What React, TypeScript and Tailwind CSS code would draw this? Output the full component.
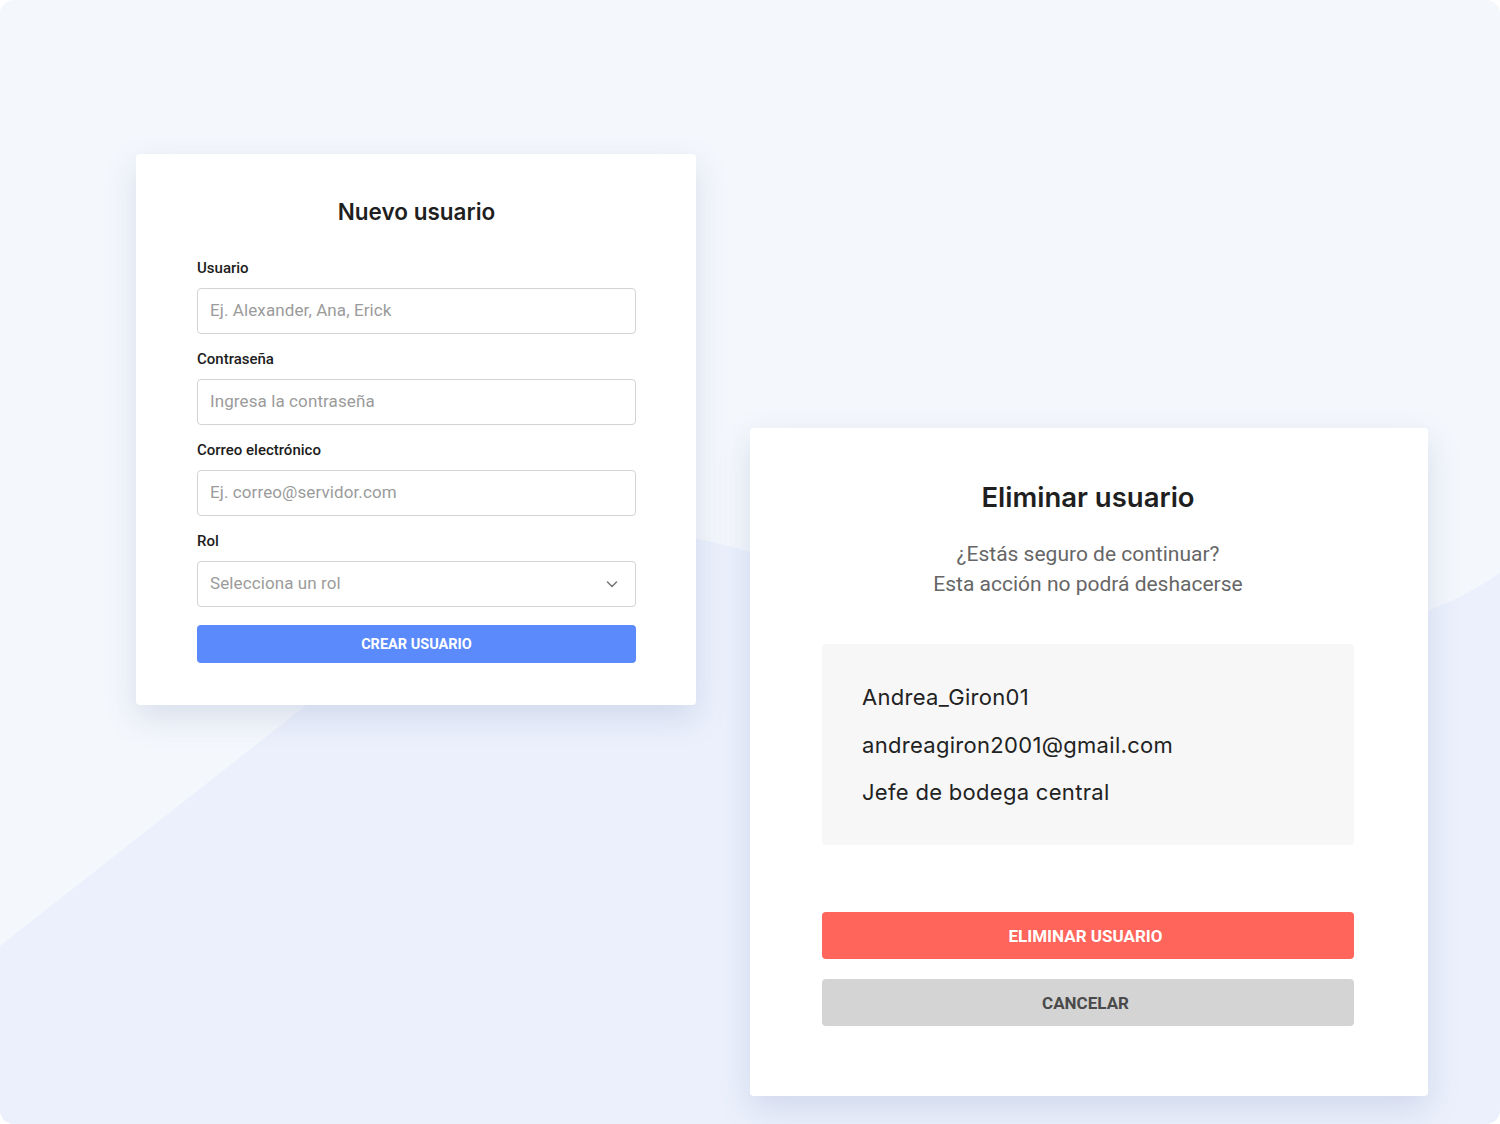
import React from "react";

const roboto = { fontFamily: "Roboto, 'Liberation Sans', sans-serif" };

function Field({ label, placeholder, select }: { label: string; placeholder: string; select?: boolean }) {
  return (
    <div className="flex flex-col">
      <label className="text-[15px] leading-[20px] font-medium text-[#1c1c1c]" style={roboto}>
        {label}
      </label>
      <div className="mt-[10px] h-[46px] rounded-[4px] border-[1.5px] border-[#d3d3d3] bg-white flex items-center px-[12px] justify-between">
        <span className="text-[17px] text-[#9b9b9b] tracking-[0.1px]" style={roboto}>
          {placeholder}
        </span>
        {select && (
          <svg width="14" height="14" viewBox="0 0 14 14" className="mr-[4px]">
            <path d="M2.5 5 L7 9.5 L11.5 5" fill="none" stroke="#7a7a7a" strokeWidth="1.6" strokeLinecap="round" strokeLinejoin="round" />
          </svg>
        )}
      </div>
    </div>
  );
}

export default function App() {
  return (
    <div className="bg-white w-[1500px] h-[1124px]">
      <div className="relative w-[1500px] h-[1124px] rounded-[14px] overflow-hidden bg-[#f4f7fc]">
        <svg className="absolute inset-0" width="1500" height="1124" viewBox="0 0 1500 1124">
          <path
            d="M0,946 L430,608 C560,508 660,525 760,555 C1050,650 1330,690 1500,573 L1500,1124 L0,1124 Z"
            fill="#ebf0fc"
          />
        </svg>
        <div className="relative flex items-start pl-[136px] pt-[154px] gap-[54px]">
          {/* Nuevo usuario */}
          <div className="w-[560px] bg-white rounded-[4px] shadow-[0_12px_32px_rgba(90,110,160,0.18)] pl-[61px] pr-[60px] pt-[44px] pb-[42px]">
            <h2
              className="text-center text-[22.5px] leading-[28px] font-semibold text-[#1f1f1f]"
              style={{ fontFamily: "Inter, 'Open Sans', sans-serif" }}
            >
              Nuevo usuario
            </h2>
            <div className="mt-[32px] flex flex-col gap-[15px]">
              <Field label="Usuario" placeholder="Ej. Alexander, Ana, Erick" />
              <Field label="Contraseña" placeholder="Ingresa la contraseña" />
              <Field label="Correo electrónico" placeholder="Ej. correo@servidor.com" />
              <Field label="Rol" placeholder="Selecciona un rol" select />
            </div>
            <button
              className="mt-[18px] w-full h-[38px] rounded-[4px] bg-[#5b8afc] text-white text-[14.5px] font-bold pt-[2px]"
              style={roboto}
            >
              CREAR USUARIO
            </button>
          </div>

          {/* Eliminar usuario */}
          <div className="mt-[274px] w-[678px] bg-white rounded-[4px] shadow-[0_12px_32px_rgba(90,110,160,0.18)] pl-[72px] pr-[74px] pt-[53px] pb-[70px]">
            <h2
              className="text-center text-[27.5px] leading-[32px] font-semibold text-[#1f1f1f]"
              style={{ fontFamily: "Inter, 'Open Sans', sans-serif" }}
            >
              Eliminar usuario
            </h2>
            <div className="mt-[26px] text-center text-[21px] leading-[30px] text-[#666666]" style={roboto}>
              <p>¿Estás seguro de continuar?</p>
              <p>Esta acción no podrá deshacerse</p>
            </div>
            <div
              className="mt-[45px] h-[201px] rounded-[4px] bg-[#f7f7f7] pl-[40px] pt-[30px] text-[22px] tracking-[0.3px] leading-[47.5px] text-[#222222]"
              style={{ fontFamily: "Inter, 'Open Sans', sans-serif" }}
            >
              <p>Andrea_Giron01</p>
              <p>andreagiron2001@gmail.com</p>
              <p>Jefe de bodega central</p>
            </div>
            <button
              className="mt-[67px] w-full h-[47px] rounded-[4px] bg-[#ff655a] text-white text-[17px] font-bold pt-[2px] pr-[5px]"
              style={roboto}
            >
              ELIMINAR USUARIO
            </button>
            <button
              className="mt-[20px] w-full h-[47px] rounded-[4px] bg-[#d4d4d4] text-[#4a4a4a] text-[17px] font-bold pt-[2px] pr-[5px]"
              style={roboto}
            >
              CANCELAR
            </button>
          </div>
        </div>
      </div>
    </div>
  );
}
